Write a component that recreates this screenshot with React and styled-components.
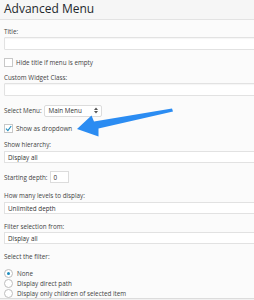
import React from "react";
import styled, { createGlobalStyle } from "styled-components";

const Global = createGlobalStyle`
  html, body { margin: 0; padding: 0; background: #f1f1f1; overflow: hidden; }
  body { font-family: "Open Sans", "Liberation Sans", sans-serif; color: #444; }
`;

const Panel = styled.div`
  position: relative;
  width: 254px;
  height: 298px;
  background: #fbfbfb;
  border-bottom: 1px solid #dcdcdc;
  overflow: hidden;
`;

const Header = styled.div`
  height: 20px;
  box-sizing: border-box;
  background: #f6f6f6;
  border-bottom: 1px solid #e3e3e3;
  padding: 0 4px 2px;
  display: flex;
  align-items: center;
  font-size: 12px;
  color: #23282d;
  white-space: nowrap;
`;

const Body = styled.div`
  padding: 7px 0 0 4px;
  width: 300px;
`;

const Label = styled.div`
  font-size: 6.3px;
  line-height: 10px;
  height: 10px;
  margin-top: ${(p) => p.$mt || 0}px;
  color: #444;
  white-space: nowrap;
`;

const TextInput = styled.div`
  box-sizing: border-box;
  height: 13px;
  background: #fff;
  border: 1px solid #e2e2e2;
  border-radius: 1px;
  box-shadow: inset 0 1px 1px rgba(0,0,0,0.04);
`;

const SelectFull = styled.div`
  box-sizing: border-box;
  height: 12px;
  margin-top: ${(p) => p.$mt || 0}px;
  background: #fff;
  border: 1px solid #e2e2e2;
  display: flex;
  align-items: center;
  padding-left: 3px;
  font-size: 6.3px;
  color: #333;
`;

const Row = styled.div`
  display: flex;
  align-items: center;
  gap: ${(p) => p.$gap || 3}px;
  height: ${(p) => p.$h || 9}px;
  margin-top: ${(p) => p.$mt || 0}px;
  font-size: 6.3px;
  color: #444;
  white-space: nowrap;
`;

const Check = styled.div`
  box-sizing: border-box;
  width: 9px;
  height: 9px;
  border: 1px solid #c8c8c8;
  background: #fff;
  display: flex;
  align-items: center;
  justify-content: center;
`;

const Radio = styled.div`
  box-sizing: border-box;
  width: 9px;
  height: 9px;
  border-radius: 50%;
  border: 1px solid #bdbdbd;
  background: #fff;
  display: flex;
  align-items: center;
  justify-content: center;
  &::after {
    content: "";
    width: 3px;
    height: 3px;
    border-radius: 50%;
    background: ${(p) => (p.$on ? "#1e8cbe" : "transparent")};
  }
`;

const SmallSelect = styled.div`
  box-sizing: border-box;
  width: 58px;
  height: 12px;
  background: #fff;
  border: 1px solid #dcdcdc;
  border-radius: 2px;
  display: flex;
  align-items: center;
  justify-content: space-between;
  padding: 0 3px 0 4px;
  font-size: 6.3px;
  color: #333;
`;

const NumInput = styled.div`
  box-sizing: border-box;
  width: 19px;
  height: 12px;
  background: #fff;
  border: 1px solid #dcdcdc;
  display: flex;
  align-items: center;
  padding-left: 3px;
  font-size: 6.3px;
  color: #333;
`;

const Arrow = styled.svg`
  position: absolute;
  left: 0;
  top: 0;
  pointer-events: none;
`;

const RadioRow = styled(Row)`
  height: 10px;
  gap: 4px;
`;

const Spacer = styled.div`
  height: ${(p) => p.$h}px;
`;

export default function App() {
  return (
    <>
      <Global />
      <Panel>
        <Header>Advanced Menu</Header>
        <Body>
          <Label>Title:</Label>
          <TextInput />
          <Row $mt={8}>
            <Check />
            <span>Hide title if menu is empty</span>
          </Row>
          <Label $mt={6}>Custom Widget Class:</Label>
          <TextInput />
          <Row $mt={9} $h={11} $gap={2}>
            <span>Select Menu:</span>
            <SmallSelect>
              <span>Main Menu</span>
              <svg width="4" height="7" viewBox="0 0 4 7">
                <path d="M0 3 L2 0.5 L4 3 Z M0 4 L2 6.5 L4 4 Z" fill="#555" />
              </svg>
            </SmallSelect>
          </Row>
          <Row $mt={8}>
            <Check>
              <svg width="7" height="7" viewBox="0 0 7 7">
                <path d="M1 3.6 L2.9 5.6 L6.2 1" stroke="#1e8cbe" strokeWidth="1.1" fill="none" />
              </svg>
            </Check>
            <span>Show as dropdown</span>
          </Row>
          <Label $mt={7}>Show hierarchy:</Label>
          <SelectFull $mt={1}>Display all</SelectFull>
          <Row $mt={8} $h={12} $gap={2}>
            <span>Starting depth:</span>
            <NumInput>0</NumInput>
          </Row>
          <Label $mt={8}>How many levels to display:</Label>
          <SelectFull $mt={1}>Unlimited depth</SelectFull>
          <Label $mt={8}>Filter selection from:</Label>
          <SelectFull>Display all</SelectFull>
          <Label $mt={8}>Select the filter:</Label>
          <Spacer $h={6} />
          <RadioRow>
            <Radio $on />
            <span>None</span>
          </RadioRow>
          <RadioRow>
            <Radio />
            <span>Display direct path</span>
          </RadioRow>
          <RadioRow>
            <Radio />
            <span>Display only children of selected item</span>
          </RadioRow>
        </Body>
        <Arrow width="254" height="300" viewBox="0 0 254 300">
          <path
            d="M77 129 L91.5 115.5 L94 121.5 L172 108.5 L173 111.5 L98.5 128.5 L98.5 136.5 Z"
            fill="#2b8cf2"
          />
        </Arrow>
      </Panel>
    </>
  );
}
